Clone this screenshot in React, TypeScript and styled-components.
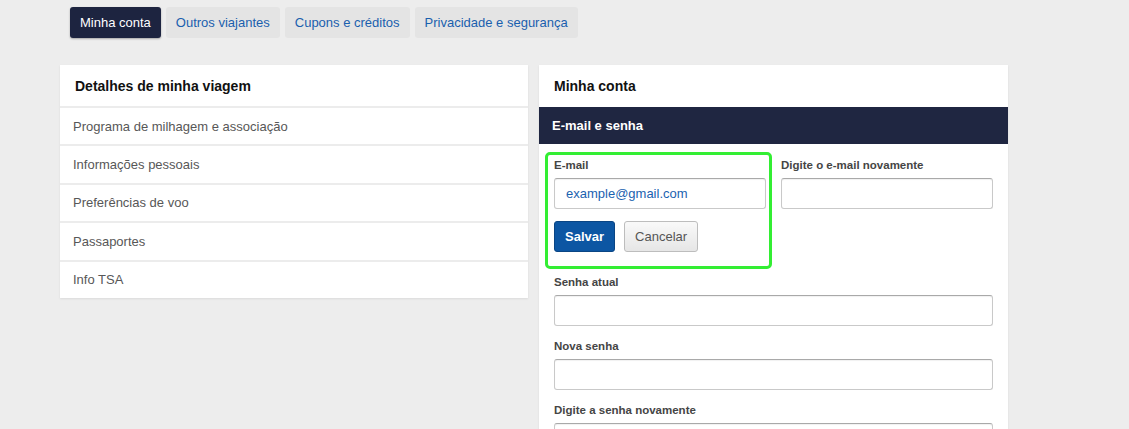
import styled, { createGlobalStyle } from "styled-components";

const GlobalStyle = createGlobalStyle`
  html, body {
    margin: 0;
    padding: 0;
    background: #ededed;
    font-family: "Liberation Sans", Arial, sans-serif;
  }
`;

const Page = styled.div`
  width: 1129px;
  height: 429px;
  overflow: hidden;
  background: #ededed;
`;

const TabBar = styled.nav`
  display: flex;
  gap: 5px;
  padding: 7px 0 0 70px;
`;

interface ITab {
  active?: boolean;
}
const Tab = styled.button<ITab>`
  height: 31px;
  padding: 0 10px;
  border: none;
  border-radius: 3px;
  font-family: inherit;
  font-size: 13px;
  background: ${(props) => (props.active ? "#1d2440" : "#e4e4e4")};
  color: ${(props) => (props.active ? "#ffffff" : "#1a5fae")};
  box-shadow: ${(props) =>
    props.active ? "0 1px 2px rgba(0,0,0,0.3)" : "none"};
`;

const Columns = styled.div`
  display: flex;
  gap: 11px;
  padding: 27px 0 0 60px;
  align-items: flex-start;
`;

interface ICard {
  width: number;
}
const Card = styled.section<ICard>`
  width: ${(props) => props.width}px;
  background: #fff;
  box-shadow: 0 1px 2px rgba(0, 0, 0, 0.08);
`;

interface ICardTitle {
  height: number;
}
const CardTitle = styled.h2<ICardTitle>`
  margin: 0;
  height: ${(props) => props.height}px;
  display: flex;
  align-items: center;
  padding-left: 15px;
  font-size: 14px;
  font-weight: 700;
  color: #111;
`;

const MenuRow = styled.div`
  height: 36.4px;
  display: flex;
  align-items: center;
  padding-left: 13px;
  border-top: 2px solid #ececec;
  font-size: 13px;
  color: #575757;
`;

const Band = styled.div`
  height: 37px;
  display: flex;
  align-items: center;
  padding-left: 13px;
  background: #1f2641;
  color: #fff;
  font-size: 13px;
  font-weight: 700;
`;

const EmailRow = styled.div`
  display: flex;
  gap: 9px;
  padding: 8px 15px 0 6px;
  align-items: flex-start;
`;

const Highlight = styled.div`
  width: 227px;
  box-sizing: border-box;
  border: 3px solid #33ee33;
  border-radius: 5px;
  padding: 3px 3px 14px 6px;
`;

const SideField = styled.div`
  width: 212px;
  padding-top: 6px;
`;

const Label = styled.label`
  display: block;
  font-size: 11.5px;
  line-height: 14px;
  font-weight: 700;
  color: #454545;
  margin-bottom: 6px;
`;

const Input = styled.input`
  display: block;
  width: 100%;
  box-sizing: border-box;
  height: 31px;
  padding: 0 11px;
  border: 1px solid #c9c9c9;
  border-top-color: #a9a9a9;
  border-radius: 3px;
  font-family: inherit;
  font-size: 13px;
  color: #1b62b0;
  background: #fff;
  box-shadow: inset 0 1px 1px rgba(0, 0, 0, 0.06);
  outline: none;
`;

const Actions = styled.div`
  display: flex;
  gap: 9px;
  margin-top: 12px;
`;

interface IButton {
  primary?: boolean;
}
const Button = styled.button<IButton>`
  height: 31px;
  padding: 0 10px;
  border-radius: 3px;
  font-family: inherit;
  font-size: 13px;
  font-weight: ${(props) => (props.primary ? 700 : 400)};
  color: ${(props) => (props.primary ? "#fff" : "#555")};
  background: ${(props) =>
    props.primary ? "#0c56a3" : "linear-gradient(#f9f9f9, #e6e6e6)"};
  border: 1px solid ${(props) => (props.primary ? "#0a4584" : "#bdbdbd")};
`;

const PasswordFields = styled.div`
  padding: 6px 15px 0 15px;
  display: flex;
  flex-direction: column;
  gap: 13px;
`;

const menuItems = [
  "Programa de milhagem e associação",
  "Informações pessoais",
  "Preferências de voo",
  "Passaportes",
  "Info TSA",
];

const tabs = [
  "Minha conta",
  "Outros viajantes",
  "Cupons e créditos",
  "Privacidade e segurança",
];

const passwordLabels = ["Senha atual", "Nova senha", "Digite a senha novamente"];

export default function App() {
  return (
    <Page>
      <GlobalStyle />
      <TabBar>
        {tabs.map((t, i) => (
          <Tab key={t} active={i === 0}>
            {t}
          </Tab>
        ))}
      </TabBar>
      <Columns>
        <Card width={468}>
          <CardTitle height={41}>Detalhes de minha viagem</CardTitle>
          {menuItems.map((item) => (
            <MenuRow key={item}>{item}</MenuRow>
          ))}
        </Card>
        <Card width={469}>
          <CardTitle height={42}>Minha conta</CardTitle>
          <Band>E-mail e senha</Band>
          <EmailRow>
            <Highlight>
              <Label>E-mail</Label>
              <Input defaultValue="example@gmail.com" />
              <Actions>
                <Button primary>Salvar</Button>
                <Button>Cancelar</Button>
              </Actions>
            </Highlight>
            <SideField>
              <Label>Digite o e-mail novamente</Label>
              <Input />
            </SideField>
          </EmailRow>
          <PasswordFields>
            {passwordLabels.map((l) => (
              <div key={l}>
                <Label>{l}</Label>
                <Input type="password" />
              </div>
            ))}
          </PasswordFields>
        </Card>
      </Columns>
    </Page>
  );
}
